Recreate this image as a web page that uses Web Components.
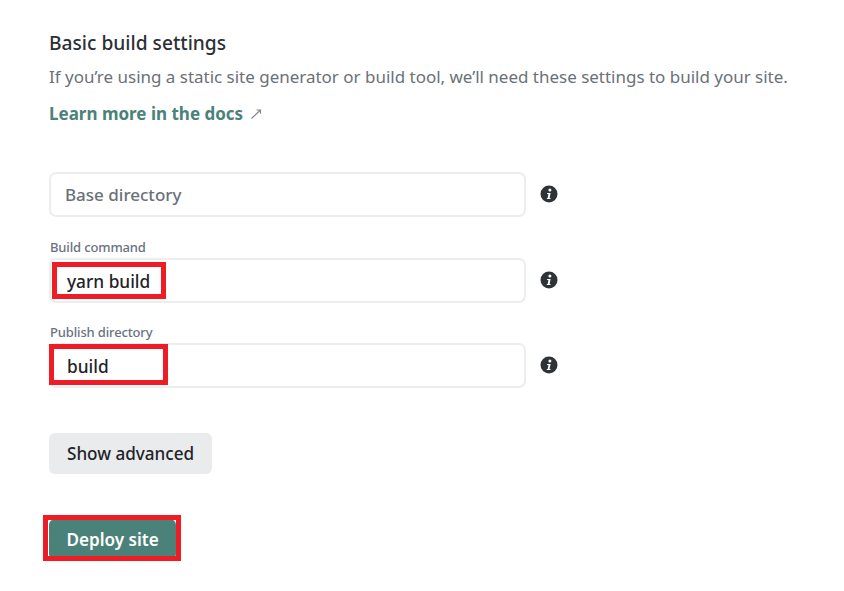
<!DOCTYPE html>
<html lang="en"><head><meta charset="utf-8"><title>Basic build settings</title>
<style>
html,body{margin:0;padding:0;background:#fff}
body{font-family:"Noto Sans","Open Sans","Liberation Sans",sans-serif;width:844px;height:591px;overflow:hidden}
</style></head><body>
<build-settings></build-settings>
<script>
class BuildField extends HTMLElement{
  constructor(){super();
    const s=this.attachShadow({mode:'open'});
    const label=this.getAttribute('label');
    const ph=this.getAttribute('placeholder');
    const val=this.getAttribute('value');
    const mark=this.getAttribute('mark');
    s.innerHTML=`<style>
      :host{display:block}
      .lab{display:block;font-size:13px;line-height:17px;font-weight:500;color:#6b7280;letter-spacing:-.15px;margin:0 0 2px 1px;height:17px}
      .row{display:flex;align-items:center;gap:14px}
      .box{position:relative;box-sizing:border-box;width:477px;height:45px;border:2px solid #ecedee;border-radius:7px;padding:0 14px;display:flex;align-items:center;font-size:17.2px;color:#1f2328;background:#fff}
      .val{padding-left:2px;font-size:17.3px;font-weight:500;position:relative;top:1px}
      .ph{color:#6a7178;font-weight:500;font-size:17px}
      .mark{position:absolute;box-sizing:border-box;border:5px solid #ee1c25;pointer-events:none}
      svg{display:block;width:18px;height:18px;flex:none;position:relative;top:-1px}
    </style>
    ${label?`<span class="lab">${label}</span>`:''}
    <div class="row"><div class="box">${val?`<span class="val">${val}</span>`:`<span class="ph">${ph}</span>`}${mark?`<i class="mark" style="${mark}"></i>`:''}</div>
    <svg viewBox="0 0 18 18" aria-hidden="true"><circle cx="9" cy="9" r="8.5" fill="#2e3338"/><circle cx="9.900" cy="5" r="1.500" fill="#fff"/><path d="M7.100 8h3.500l-1 5.100h.9v1H6.800v-1h.9l.7-4H7.100z" fill="#fff"/></svg></div>`;
  }
}
customElements.define('build-field',BuildField);

class ActionButton extends HTMLElement{
  constructor(){super();
    const s=this.attachShadow({mode:'open'});
    s.innerHTML=`<style>
      :host{display:block;width:max-content;position:relative}
      button{display:block;box-sizing:border-box;height:41px;border:0;border-radius:6px;padding:0 var(--pad,18px);font:inherit;font-size:17.1px;background:var(--bg,#e9ebed);color:var(--fg,#1f2328);font-weight:var(--w,500)}
      .mark{position:absolute;left:-6px;top:-4px;right:-5px;bottom:-1px;border:5px solid #ee1c25}
    </style><button><slot></slot></button>${this.hasAttribute('marked')?'<i class="mark"></i>':''}`;
  }
}
customElements.define('action-button',ActionButton);

class BuildSettings extends HTMLElement{
  constructor(){super();
    const s=this.attachShadow({mode:'open'});
    s.innerHTML=`<style>
      :host{display:block;box-sizing:border-box;padding:31px 0 0 49px}
      h2{margin:0;font-size:19.2px;line-height:24px;font-weight:500;color:#2b3035}
      p{margin:10px 0 0;font-size:16.98px;line-height:24px;color:#6a7178;white-space:nowrap}
      a{display:flex;align-items:center;gap:7px;margin-top:13px;font-size:17px;line-height:24px;font-weight:700;color:#4a8279;text-decoration:none}
      a svg{width:12px;height:12px;display:block}
      .fields{margin-top:46px;display:flex;flex-direction:column;gap:21px}
      .fields build-field:first-child{margin-bottom:1px}
      .adv{margin-top:45px}
      .dep{margin-top:45px;--bg:#4a8279;--fg:#fff;--w:600;--pad:17.5px}
    </style>
    <h2>Basic build settings</h2>
    <p>If you’re using a static site generator or build tool, we’ll need these settings to build your site.</p>
    <a href="#">Learn more in the docs <svg viewBox="0 0 12 12" aria-hidden="true"><path d="M1.500 10.500 10 2.500M6.500 2h4v3.800" fill="none" stroke="#7f8a96" stroke-width="1.200"/></svg></a>
    <div class="fields">
      <build-field placeholder="Base directory"></build-field>
      <build-field label="Build command" value="yarn build" mark="left:1px;top:2px;width:114px;height:37px"></build-field>
      <build-field label="Publish directory" value="build" mark="left:-2px;top:-1px;width:119px;height:41px"></build-field>
    </div>
    <action-button class="adv">Show advanced</action-button>
    <action-button class="dep" marked>Deploy site</action-button>`;
  }
}
customElements.define('build-settings',BuildSettings);
</script>
</body></html>
